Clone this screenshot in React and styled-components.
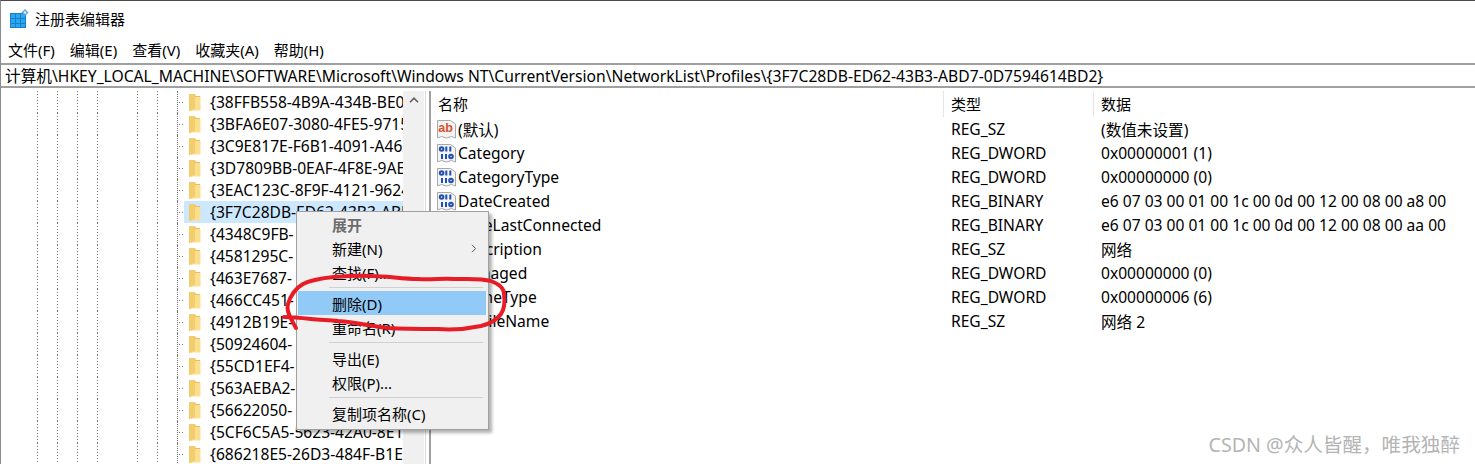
import React from 'react';
import styled, { createGlobalStyle } from 'styled-components';

const GlobalStyle = createGlobalStyle`
  html, body {
    margin: 0;
    padding: 0;
    background: #fff;
    overflow: hidden;
  }
  #root {
    height: 464px;
  }
`;

const Window = styled.div`
  position: relative;
  width: 1475px;
  height: 464px;
  box-sizing: border-box;
  overflow: hidden;
  display: flex;
  flex-direction: column;
  background: #fff;
  color: #000;
  border-top: 1px solid #4a4a4a;
  border-left: 1px solid #8c8c8c;
  font-family: 'Noto Sans', 'Noto Sans CJK SC', sans-serif;
  font-size: 15.6px;
`;

const TitleBar = styled.div`
  height: 35px;
  display: flex;
  align-items: center;
  gap: 6px;
  padding-left: 9px;
  font-size: 15px;
`;

const MenuBar = styled.div`
  height: 27px;
  display: flex;
  align-items: center;
  gap: 15px;
  padding-left: 7px;
  font-size: 15px;
`;

const AddressBar = styled.div`
  height: 25px;
  box-sizing: border-box;
  border-top: 2px solid #a0a0a0;
  border-bottom: 2px solid #a0a0a0;
  display: flex;
  align-items: center;
  padding-left: 4px;
  white-space: nowrap;
  font-size: 15.66px;
`;

const Content = styled.div`
  flex: 1;
  min-height: 0;
  display: flex;
  padding-top: 3px;
`;

const TreePane = styled.div`
  width: 402px;
  flex: none;
  overflow: hidden;
`;

const TreeRow = styled.div`
  height: 22px;
  display: flex;
  align-items: center;
  white-space: nowrap;
  overflow: hidden;
`;

const Guides = styled.div`
  width: 176px;
  height: 100%;
  flex: none;
  background-repeat: no-repeat;
  background-size: 1px 100%;
  background-position: 36px 0, 56px 0, 76px 0, 96px 0, 136px 0, 156px 0;
  background-image:
    repeating-linear-gradient(to bottom, #777 0 1px, transparent 1px 3px),
    repeating-linear-gradient(to bottom, #777 0 1px, transparent 1px 3px),
    repeating-linear-gradient(to bottom, #777 0 1px, transparent 1px 3px),
    repeating-linear-gradient(to bottom, #777 0 1px, transparent 1px 3px),
    repeating-linear-gradient(to bottom, #777 0 1px, transparent 1px 3px),
    repeating-linear-gradient(to bottom, #777 0 1px, transparent 1px 3px);
`;

const Connector = styled.div`
  width: 7px;
  height: 100%;
  flex: none;
  border-left: 1px dotted #777;
  box-sizing: border-box;
  background: repeating-linear-gradient(to right, #777 0 1px, transparent 1px 3px) no-repeat 1px 11px / 6px 1px;
`;

const TreeItem = styled.div`
  flex: 1;
  min-width: 0;
  height: 100%;
  display: flex;
  align-items: center;
  gap: 9px;
  padding-left: 5px;
  overflow: hidden;
  background: ${(p) => (p.$selected ? '#cce8ff' : 'transparent')};
`;

const ScrollBar = styled.div`
  width: 21px;
  flex: none;
  background: #f0f0f0;
  display: flex;
  justify-content: center;
  padding-top: 6px;
  box-sizing: border-box;
`;

const Splitter = styled.div`
  width: 6px;
  flex: none;
  margin-left: 1px;
  box-sizing: border-box;
  border-left: 1px solid #d8d8d8;
  border-right: 2px solid #a0a0a0;
`;

const ListPane = styled.div`
  flex: 1;
  min-width: 0;
`;

const ListHeader = styled.div`
  height: 26px;
  display: grid;
  grid-template-columns: 513px 150px 1fr;
  align-items: center;
`;

const HeaderCell = styled.div`
  height: 100%;
  display: flex;
  align-items: center;
  padding: 0 0 2px 7px;
  box-sizing: border-box;
  font-size: 15px;
  border-right: ${(p) => (p.$last ? 'none' : '1px solid #e5e5e5')};
`;

const ListRow = styled.div`
  height: 24px;
  display: grid;
  grid-template-columns: 513px 150px 1fr;
  align-items: center;
  white-space: nowrap;
`;

const NameCell = styled.div`
  display: flex;
  align-items: center;
  gap: 2px;
  padding-left: 6px;
`;

const ValueCell = styled.div`
  padding-left: 7px;
`;

const ContextMenu = styled.div`
  position: absolute;
  left: 295px;
  top: 210px;
  width: 193px;
  height: 219px;
  box-sizing: border-box;
  background: #f0f0f0;
  border: 1px solid #a0a0a0;
  box-shadow: 3px 3px 3px rgba(0, 0, 0, 0.3);
  padding: 0 2px 0 1px;
  font-size: 15px;
`;

const MenuItem = styled.div`
  height: 24px;
  display: flex;
  align-items: center;
  justify-content: space-between;
  padding: 0 9px 0 34px;
  background: ${(p) => (p.$active ? '#91c9f7' : 'transparent')};
  color: ${(p) => (p.$disabled ? '#6d6d6d' : '#000')};
  font-weight: ${(p) => (p.$disabled ? 700 : 400)};
`;

const MenuSeparator = styled.div`
  height: 1px;
  margin: 3px 3px 3px 31px;
  background: #d0d0d0;
`;

const Scribble = styled.svg`
  position: absolute;
  left: 0;
  top: 0;
  pointer-events: none;
`;

const Watermark = styled.div`
  position: absolute;
  right: 15px;
  bottom: 6px;
  color: #b4b4b4;
  font-size: 19.6px;
`;

const RegeditIcon = () => (
  <svg width="19" height="20" viewBox="0 0 19 20">
    <rect x="0" y="4" width="16" height="15" fill="#1581c9" />
    <g fill="#2aa7ee">
      <rect x="1" y="5" width="4" height="4" />
      <rect x="6" y="5" width="4" height="4" />
      <rect x="11" y="5" width="4" height="4" />
      <rect x="1" y="10" width="4" height="4" />
      <rect x="6" y="10" width="4" height="4" />
      <rect x="11" y="10" width="4" height="4" />
      <rect x="1" y="15" width="4" height="3" />
      <rect x="6" y="15" width="4" height="3" />
      <rect x="11" y="15" width="4" height="3" />
    </g>
    <path d="M15 0l3.5 3.5L15 7l-3.5-3.5z" fill="#5ba8d8" />
    <circle cx="15" cy="3.5" r="1.3" fill="#d5ecfa" />
  </svg>
);

const FolderIcon = () => (
  <svg width="12" height="17" viewBox="0 0 12 17" style={{ flex: 'none' }}>
    <path d="M0 0h6l1 2h4v12l-11 3z" fill="#e8bf5e" />
    <path d="M0 3h11.5v13.5h-11.5z" fill="#fbdf8f" />
    <path d="M0 0h6v15l-6 2z" fill="#f3cc6b" />
  </svg>
);

const Chevron = () => (
  <svg width="10" height="6" viewBox="0 0 10 6">
    <path d="M1 5.2L5 1.2l4 4" fill="none" stroke="#606060" strokeWidth="1.6" />
  </svg>
);

const SubmenuArrow = () => (
  <svg width="6" height="9" viewBox="0 0 6 9">
    <path d="M1 .8l3.6 3.7L1 8.2" fill="none" stroke="#555" strokeWidth="1" />
  </svg>
);

const PaperIcon = ({ children }) => (
  <svg width="19" height="20" viewBox="0 0 19 20" style={{ flex: 'none' }}>
    <path d="M.5 1.5h13l5 3.5v14l-4-1.5-5 1.5-5-1.5-4 1.5z" fill="#f4f4f4" stroke="#a8a8a8" />
    {children}
  </svg>
);

const StringIcon = () => (
  <PaperIcon>
    <text x="1.2" y="13" fontFamily="'Liberation Sans', sans-serif" fontWeight="700" fontSize="12.5" fill="#d9512c">ab</text>
  </PaperIcon>
);

const BinaryIcon = () => (
  <PaperIcon>
    <g fill="none" stroke="#1f4fb0" strokeWidth="2">
      <circle cx="4.6" cy="6" r="1.8" />
      <path d="M9.3 3.5v5M13.3 3.5v5M5 11v5M9 11v5" />
      <circle cx="14" cy="13.5" r="1.8" />
    </g>
  </PaperIcon>
);

const treeItems = [
  '{38FFB558-4B9A-434B-BE0C-8E2A1F6D',
  '{3BFA6E07-3080-4FE5-9715-2C4D5E6F',
  '{3C9E817E-F6B1-4091-A462-7A8B9C0D',
  '{3D7809BB-0EAF-4F8E-9AE1-3B4C5D6E',
  '{3EAC123C-8F9F-4121-9624-5F6A7B8C',
  '{3F7C28DB-ED62-43B3-ABD7-0D759461',
  '{4348C9FB-',
  '{4581295C-',
  '{463E7687-',
  '{466CC451-',
  '{4912B19E-',
  '{50924604-',
  '{55CD1EF4-',
  '{563AEBA2-',
  '{56622050-',
  '{5CF6C5A5-5623-42A0-8E1B-9D2C3E4F',
  '{686218E5-26D3-484F-B1E2-6A7B8C9D',
];

const values = [
  ['(默认)', 'REG_SZ', '(数值未设置)', true],
  ['Category', 'REG_DWORD', '0x00000001 (1)'],
  ['CategoryType', 'REG_DWORD', '0x00000000 (0)'],
  ['DateCreated', 'REG_BINARY', 'e6 07 03 00 01 00 1c 00 0d 00 12 00 08 00 a8 00'],
  ['DateLastConnected', 'REG_BINARY', 'e6 07 03 00 01 00 1c 00 0d 00 12 00 08 00 aa 00'],
  ['Description', 'REG_SZ', '网络', true],
  ['Managed', 'REG_DWORD', '0x00000000 (0)'],
  ['NameType', 'REG_DWORD', '0x00000006 (6)'],
  ['ProfileName', 'REG_SZ', '网络 2', true],
];

const App = () => (
  <Window>
    <GlobalStyle />
    <TitleBar>
      <RegeditIcon />
      注册表编辑器
    </TitleBar>
    <MenuBar>
      <span>文件(F)</span>
      <span>编辑(E)</span>
      <span>查看(V)</span>
      <span>收藏夹(A)</span>
      <span>帮助(H)</span>
    </MenuBar>
    <AddressBar>
      计算机\HKEY_LOCAL_MACHINE\SOFTWARE\Microsoft\Windows NT\CurrentVersion\NetworkList\Profiles\{'{'}3F7C28DB-ED62-43B3-ABD7-0D7594614BD2{'}'}
    </AddressBar>
    <Content>
      <TreePane>
        {treeItems.map((item, i) => (
          <TreeRow key={item}>
            <Guides />
            <Connector />
            <TreeItem $selected={i === 5}>
              <FolderIcon />
              {item}
            </TreeItem>
          </TreeRow>
        ))}
      </TreePane>
      <ScrollBar>
        <Chevron />
      </ScrollBar>
      <Splitter />
      <ListPane>
        <ListHeader>
          <HeaderCell>名称</HeaderCell>
          <HeaderCell>类型</HeaderCell>
          <HeaderCell $last>数据</HeaderCell>
        </ListHeader>
        {values.map(([name, type, data, isString]) => (
          <ListRow key={name}>
            <NameCell>
              {isString ? <StringIcon /> : <BinaryIcon />}
              {name}
            </NameCell>
            <ValueCell>{type}</ValueCell>
            <ValueCell>{data}</ValueCell>
          </ListRow>
        ))}
      </ListPane>
    </Content>
    <ContextMenu>
      <MenuItem $disabled>展开</MenuItem>
      <MenuItem>
        新建(N)
        <SubmenuArrow />
      </MenuItem>
      <MenuItem>查找(F)...</MenuItem>
      <MenuSeparator />
      <MenuItem $active>删除(D)</MenuItem>
      <MenuItem>重命名(R)</MenuItem>
      <MenuSeparator />
      <MenuItem>导出(E)</MenuItem>
      <MenuItem>权限(P)...</MenuItem>
      <MenuSeparator />
      <MenuItem>复制项名称(C)</MenuItem>
    </ContextMenu>
    <Scribble width="1475" height="464" viewBox="0 0 1475 464">
      <path
        d="M295 327C290 318 285 310 287 303C290 293 295 287 302 283C312 278 322 277 333 276C345 275 358 274 370 275C385 275 402 278 417 278C430 279 442 277 453 278C466 278 480 277 490 280C498 283 503 288 503 293C504 300 504 307 500 313C495 320 488 323 480 325C466 328 451 329 437 328C420 328 403 328 387 327C370 325 354 321 337 320C328 319 319 319 310 318C301 317 292 316 283 316"
        fill="none"
        stroke="#e81c26"
        strokeWidth="4"
        strokeLinecap="round"
      />
    </Scribble>
    <Watermark>CSDN @众人皆醒，唯我独醉</Watermark>
  </Window>
);

export default App;
